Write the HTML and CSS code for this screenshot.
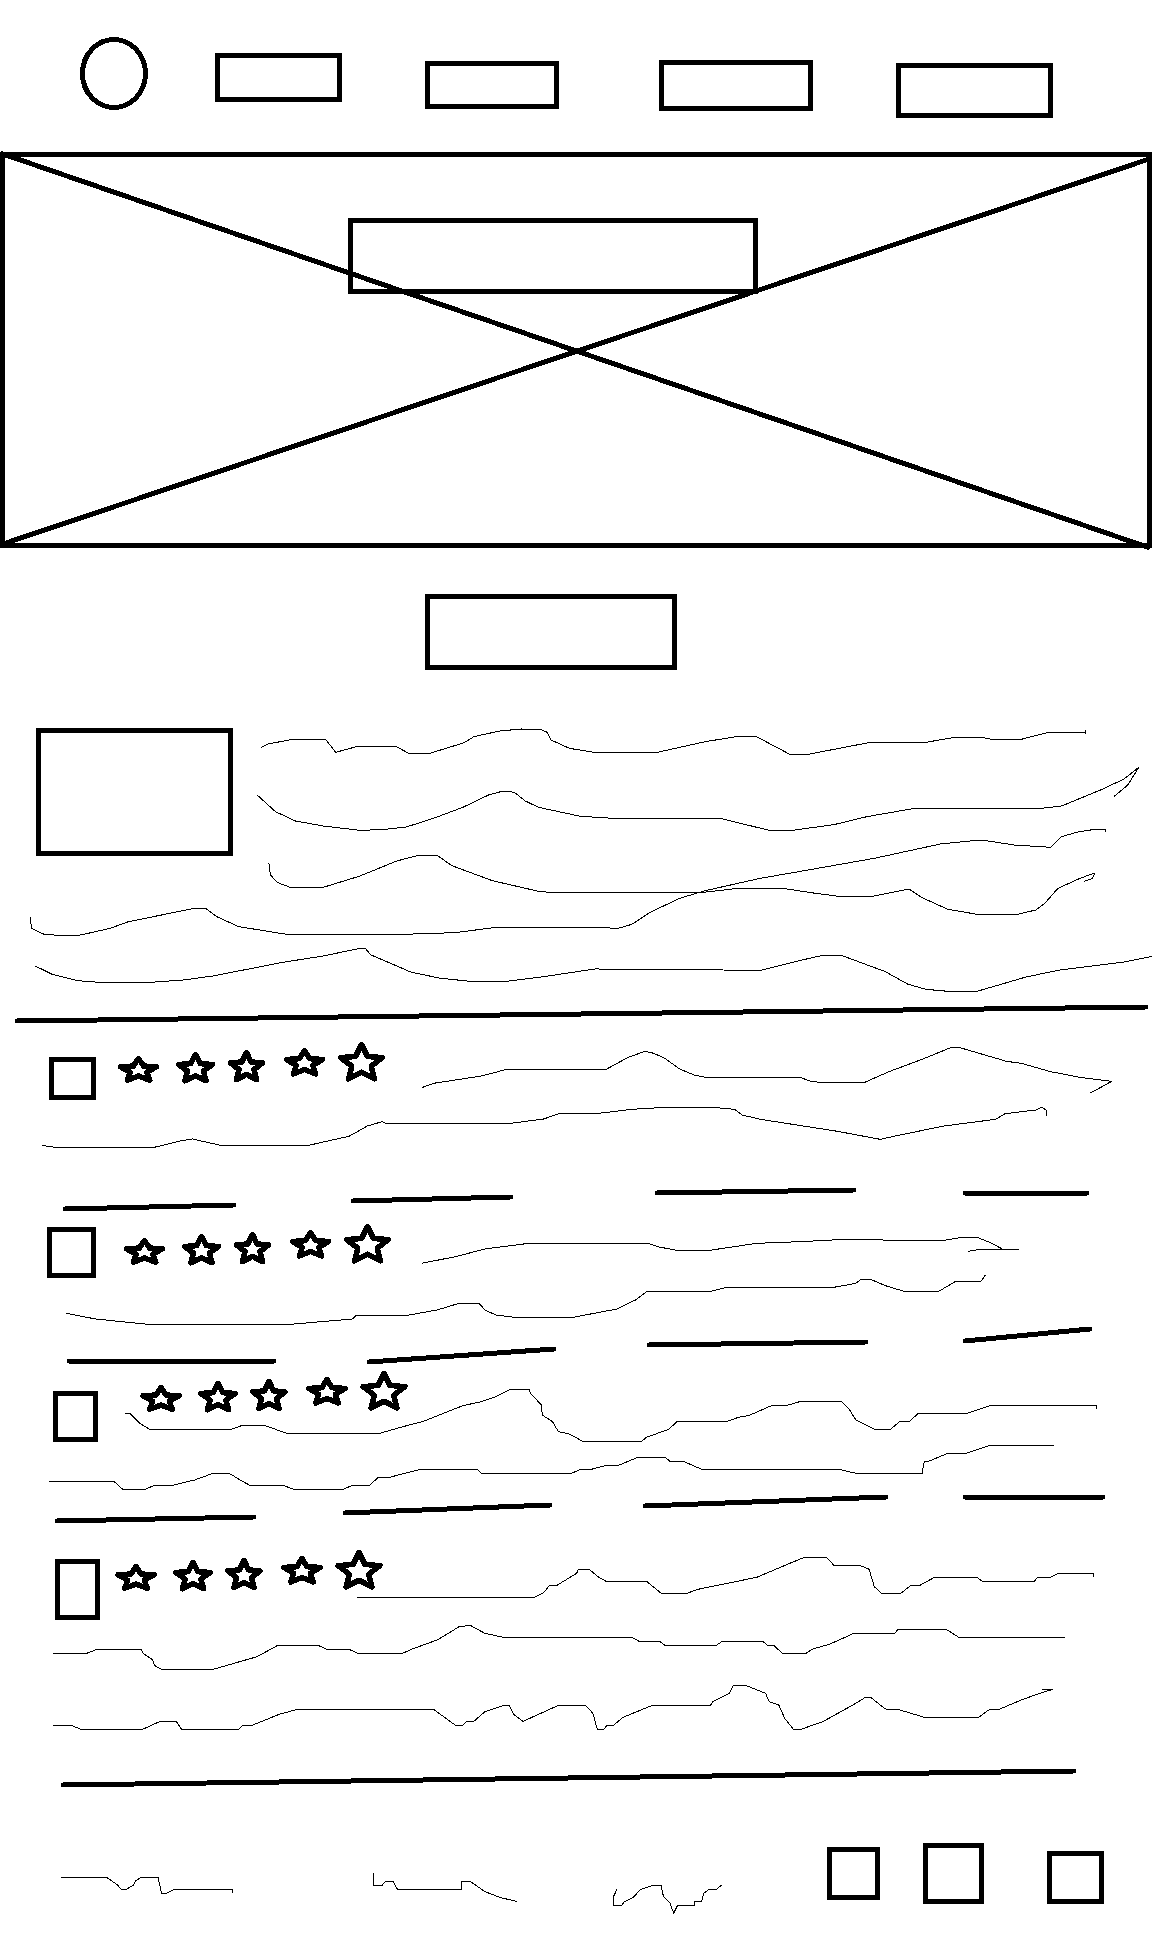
FILE: index.html
```html
<!DOCTYPE html>
<html lang="en">
<head>
    <meta charset="UTF-8">
    <meta name="viewport" content="width=device-width, initial-scale=1.0">
    <title>Wireframe sketch</title>
    <link rel="stylesheet" href="styles.css">
</head>
<body>
    <svg class="sketch" width="1152" height="1960" viewBox="0 0 1152 1960" role="img" aria-label="Hand drawn page wireframe">
        <defs>
            <!-- One row of five stars, pasted four times -->
            <g id="stars">
                <polygon class="star" transform="translate(138.5 1070.5) scale(19 12)" points="0,-1 .27,-.37 .95,-.31 .44,.14 .59,.81 0,.46 -.59,.81 -.44,.14 -.95,-.31 -.27,-.37"/>
                <polygon class="star" transform="translate(195.5 1069) scale(18 14.5)" points="0,-1 .27,-.37 .95,-.31 .44,.14 .59,.81 0,.46 -.59,.81 -.44,.14 -.95,-.31 -.27,-.37"/>
                <polygon class="star" transform="translate(246.5 1067.5) scale(17 15)" points="0,-1 .27,-.37 .95,-.31 .44,.14 .59,.81 0,.46 -.59,.81 -.44,.14 -.95,-.31 -.27,-.37"/>
                <polygon class="star" transform="translate(304.5 1063.5) scale(19 13)" points="0,-1 .27,-.37 .95,-.31 .44,.14 .59,.81 0,.46 -.59,.81 -.44,.14 -.95,-.31 -.27,-.37"/>
                <polygon class="star" transform="translate(361.5 1063.5) scale(22 19)" points="0,-1 .27,-.37 .95,-.31 .44,.14 .59,.81 0,.46 -.59,.81 -.44,.14 -.95,-.31 -.27,-.37"/>
            </g>
        </defs>

        <!-- Header: logo and nav boxes -->
        <ellipse class="box" cx="114" cy="73.5" rx="31.5" ry="34"/>
        <rect class="box" x="217.5" y="55.5" width="122" height="44"/>
        <rect class="box" x="427.5" y="63.5" width="129" height="43"/>
        <rect class="box" x="661.5" y="62.5" width="149" height="46"/>
        <rect class="box" x="898.5" y="65.5" width="152" height="50"/>

        <!-- Hero image placeholder -->
        <rect class="box" x="2.5" y="154.5" width="1147" height="391"/>
        <line class="box" x1="0" y1="153" x2="1150" y2="548"/>
        <line class="box" x1="0" y1="545" x2="1152" y2="158"/>
        <rect class="box" x="350.5" y="220.5" width="405" height="71"/>
        <rect class="box" x="427.5" y="596.5" width="247" height="71"/>

        <!-- Intro block -->
        <rect class="box" x="38.5" y="730.5" width="192" height="123"/>
        <line class="rule" x1="17" y1="1021" x2="1146" y2="1007"/>

        <!-- Review avatars -->
        <rect class="box" x="51.5" y="1059.5" width="42" height="38"/>
        <rect class="box" x="49.5" y="1229.5" width="44" height="46"/>
        <rect class="box" x="55.5" y="1393.5" width="40" height="46"/>
        <rect class="box" x="57.5" y="1561.5" width="40" height="56"/>

        <use href="#stars"/>
        <use href="#stars" x="6" y="182"/>
        <use href="#stars" x="22.5" y="329"/>
        <use href="#stars" x="-2.5" y="508"/>

        <!-- Review meta dashes -->
        <line class="rule" x1="65" y1="1209" x2="234" y2="1205"/>
        <line class="rule" x1="353" y1="1201" x2="511" y2="1197"/>
        <line class="rule" x1="657" y1="1193" x2="854" y2="1190"/>
        <line class="rule" x1="965" y1="1193" x2="1087" y2="1193"/>
        <line class="rule" x1="69" y1="1361" x2="274" y2="1361"/>
        <line class="rule" x1="369" y1="1362" x2="554" y2="1349"/>
        <line class="rule" x1="649" y1="1345" x2="866" y2="1342"/>
        <line class="rule" x1="965" y1="1341" x2="1090" y2="1329"/>
        <line class="rule" x1="57" y1="1521" x2="254" y2="1517"/>
        <line class="rule" x1="345" y1="1513" x2="550" y2="1505"/>
        <line class="rule" x1="645" y1="1506" x2="886" y2="1497"/>
        <line class="rule" x1="965" y1="1497" x2="1103" y2="1497"/>
        <line class="rule" x1="63" y1="1785" x2="1074" y2="1771"/>

        <!-- Footer boxes -->
        <rect class="box" x="829.5" y="1849.5" width="48" height="48"/>
        <rect class="box" x="925.5" y="1845.5" width="56" height="56"/>
        <rect class="box" x="1049.5" y="1853.5" width="52" height="48"/>

        <!-- Scribbled text, traced from wide crops and scaled back -->
        <g transform="translate(0 700) scale(.7347 .3333)">
            <polyline class="scribble" points="355,143 365,132 398,118 443,118 457,157 485,140 540,140 556,160 585,160 632,128 645,110 680,93 710,87 735,88 745,97 750,120 775,145 808,157 895,157 960,125 1005,109 1028,108 1075,163 1100,163 1180,129 1260,127 1300,112 1335,112 1350,118 1390,118 1427,97 1478,97 1478,90 1478,103"/>
            <polyline class="scribble" points="350,285 375,335 402,363 440,378 490,391 520,389 553,381 590,355 630,322 665,285 685,273 700,277 715,303 733,322 790,349 835,355 980,355 1045,390 1075,392 1135,374 1180,350 1245,325 1418,325 1445,318 1500,268 1530,237 1550,202 1535,255 1516,290"/>
            <polyline class="scribble" points="366,490 368,525 378,548 395,562 440,562 490,528 540,483 570,466 595,466 615,497 670,542 735,575 765,579 950,579 1005,565 1065,565 1110,580 1145,590 1185,590 1237,567 1255,593 1290,628 1330,643 1385,643 1410,630 1422,610 1440,565 1470,535 1490,519 1487,535 1475,545"/>
            <polyline class="scribble" points="41,650 43,685 60,703 85,707 110,705 150,685 175,665 265,625 280,625 295,650 325,680 390,703 550,703 620,698 675,682 820,682 840,686 860,673 885,637 925,595 960,572 1035,535 1100,510 1190,475 1280,432 1320,423 1345,423 1380,435 1430,442 1445,410 1465,397 1490,388 1505,388 1505,395"/>
            <polyline class="scribble" points="48,798 70,822 105,842 135,847 205,847 250,840 290,828 385,787 440,768 490,745 497,745 505,765 560,817 600,835 640,844 690,844 740,830 810,807 1035,811 1090,781 1120,766 1145,766 1205,815 1235,852 1260,868 1290,874 1330,874 1395,832 1440,811 1530,786 1568,769"/>
        </g>
        <g transform="translate(0 1020) scale(.7347 .3333)">
            <polyline class="scribble" points="574,203 590,190 655,168 690,148 825,148 855,112 878,94 890,100 905,115 925,147 945,165 960,172 1090,172 1100,182 1120,189 1175,189 1210,155 1255,118 1295,82 1305,82 1370,124 1390,130 1430,155 1470,172 1513,184 1500,200 1483,220"/>
            <polyline class="scribble" points="57,376 75,382 210,382 245,363 262,357 300,376 420,376 475,349 500,318 520,305 525,310 695,310 740,297 762,280 815,280 860,268 905,262 970,262 1000,268 1010,285 1035,298 1140,334 1198,358 1225,345 1285,318 1355,298 1368,281 1410,270 1418,262 1424,270 1425,287"/>
            <polyline class="scribble" points="574,730 620,710 660,687 720,670 882,670 895,680 925,693 960,693 1030,670 1090,665 1150,658 1200,658 1205,663 1280,663 1310,652 1330,652 1350,670 1365,688 1387,688 1335,688 1317,694"/>
            <polyline class="scribble" points="90,880 130,897 210,915 385,915 480,897 485,886 555,886 595,870 625,850 652,850 660,870 675,885 700,892 780,892 840,867 865,840 880,815 965,815 990,802 1135,802 1165,790 1172,778 1185,778 1205,797 1232,815 1277,815 1300,785 1335,785 1341,766"/>
        </g>
        <g transform="translate(0 1340) scale(.7347 .3333)">
            <polyline class="scribble" points="170,220 177,220 190,250 204,268 315,268 330,256 360,256 390,280 517,280 545,262 575,245 630,197 655,185 675,170 695,148 720,148 722,160 737,195 738,225 752,245 760,275 775,282 793,304 873,304 880,292 910,268 922,244 990,244 1005,232 1020,226 1050,197 1070,197 1090,184 1145,184 1155,205 1165,240 1190,268 1212,268 1225,244 1238,244 1250,220 1316,220 1347,197 1493,197 1493,208"/>
            <polyline class="scribble" points="67,424 155,424 167,448 198,448 210,436 235,436 265,420 290,400 312,400 330,424 340,436 385,436 400,448 467,448 480,436 503,436 515,412 530,412 572,388 650,388 655,400 778,400 790,388 805,388 825,376 842,376 868,352 905,352 912,364 930,364 955,388 1142,388 1165,400 1255,400 1258,365 1265,363 1290,340 1315,340 1347,316 1435,316"/>
            <polyline class="scribble" points="486,772 727,772 740,758 748,736 758,736 785,700 787,688 802,688 815,712 825,724 880,724 900,760 935,760 950,748 1030,712 1075,670 1095,652 1125,652 1135,676 1170,676 1183,688 1190,740 1200,760 1226,760 1240,736 1252,736 1272,712 1330,712 1337,724 1408,724 1412,712 1430,712 1440,700 1488,700 1488,712"/>
        </g>
        <g transform="translate(0 1640) scale(.7347 .3333)">
            <polyline class="scribble" points="72,40 118,40 132,28 192,28 195,40 208,60 210,76 220,88 290,88 350,50 378,16 433,16 445,28 475,28 487,40 548,40 560,28 595,0 625,-40 640,-44 660,-20 685,-8 860,-8 870,4 898,4 905,16 975,16 983,4 1038,4 1045,16 1053,16 1065,40 1097,40 1105,28 1130,12 1162,-20 1218,-20 1222,-32 1288,-32 1305,-8 1450,-8"/>
            <polyline class="scribble" points="72,256 97,256 110,268 194,268 218,244 240,244 247,268 325,268 330,256 343,256 380,223 405,208 590,208 620,256 630,256 635,244 645,244 660,215 685,197 693,197 700,225 712,244 760,196 797,196 807,220 813,268 822,268 826,256 835,256 848,232 888,196 967,196 970,185 993,160 998,136 1015,136 1042,160 1047,185 1060,195 1068,235 1080,268 1090,268 1120,245 1160,196 1178,172 1185,172 1205,207 1222,208 1258,232 1332,232 1347,208 1360,208 1390,180 1415,160 1433,148 1418,148"/>
            <polyline class="scribble" points="83,712 145,712 160,735 165,748 172,748 182,735 184,724 192,712 215,712 220,760 226,760 237,748 317,748 317,760"/>
            <polyline class="scribble" points="508,700 508,736 520,736 525,724 535,724 541,748 628,748 628,724 640,724 660,755 680,772 704,785"/>
            <polyline class="scribble" points="840,747 835,770 835,797 846,797 850,785 862,772 872,748 888,737 900,737 903,770 912,790 917,820 922,797 945,797 945,785 955,785 958,760 965,748 975,748 982,736 975,748"/>
        </g>
    </svg>
</body>
</html>
```

FILE: styles.css
```css
html, body {
    margin: 0;
    padding: 0;
    background-color: #ffffff;
}
.sketch {
    display: block;
}
.box, .rule, .star, .scribble {
    fill: none;
    stroke: #000000;
    shape-rendering: crispEdges;
}
.box {
    stroke-width: 5px;
}
.rule {
    stroke-width: 5px;
    stroke-linecap: round;
}
.star {
    fill: #ffffff;
    stroke-width: 5.5px;
    stroke-linejoin: round;
    vector-effect: non-scaling-stroke;
}
.scribble {
    stroke-width: 1px;
    vector-effect: non-scaling-stroke;
}
```
